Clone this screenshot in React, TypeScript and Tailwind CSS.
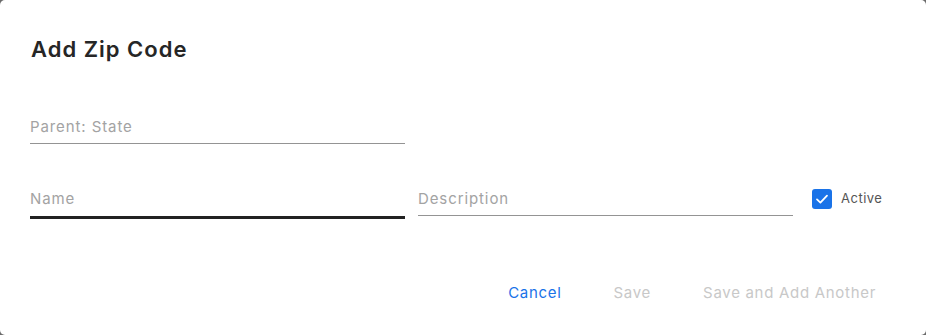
import React from 'react';

const Field: React.FC<{ label: string; focused?: boolean; className?: string }> = ({ label, focused, className }) => (
  <div className={`flex flex-col ${className ?? ''}`}>
    <div className="h-[27px] pt-[1px] flex items-center text-[15px] tracking-[0.9px] text-[#a3a3a3]">{label}</div>
    {focused ? (
      <div className="mt-[4px] h-[3px] bg-[#222222]" />
    ) : (
      <div className="mt-[3px] h-px bg-[#949494]" />
    )}
  </div>
);

const App: React.FC = () => {
  return (
    <div className="w-[926px] h-[335px] bg-[#6b6b6b]" style={{ fontFamily: 'Inter, "Noto Sans", sans-serif' }}>
      <div className="w-full h-full bg-white rounded-[5px] flex flex-col">
        <h2 className="pl-[31px] pt-[35px] text-[22px] leading-[28px] font-semibold text-[#262626] tracking-[1px]">
          Add Zip Code
        </h2>

        <div className="pl-[30px] pt-[50px]">
          <Field label="Parent: State" className="w-[375px]" />
        </div>

        <div className="pl-[30px] pt-[41px] flex items-start">
          <Field label="Name" focused className="w-[375px]" />
          <Field label="Description" className="w-[375px] ml-[13px]" />
          <label className="ml-[19px] mt-[4px] flex items-center gap-[9px]">
            <span className="w-[20px] h-[20px] rounded-[3px] bg-[#1a73e8] flex items-center justify-center">
              <svg width="14" height="14" viewBox="0 0 14 14" fill="none">
                <path d="M2 7.4 L5.4 10.6 L12 3.6" stroke="white" strokeWidth="1.8" strokeLinecap="round" strokeLinejoin="round" />
              </svg>
            </span>
            <span className="text-[13px] text-[#555555] tracking-[0.5px]">Active</span>
          </label>
        </div>

        <div className="mt-auto mb-[27px] pr-[26px] flex justify-end items-center gap-[4px] text-[15px] tracking-[0.7px]">
          <button className="px-6 h-[30px] text-[#1a73e8]">Cancel</button>
          <button className="px-6 h-[30px] text-[#c8c8c8]">Save</button>
          <button className="px-6 h-[30px] text-[#c8c8c8]">Save and Add Another</button>
        </div>
      </div>
    </div>
  );
};

export default App;
